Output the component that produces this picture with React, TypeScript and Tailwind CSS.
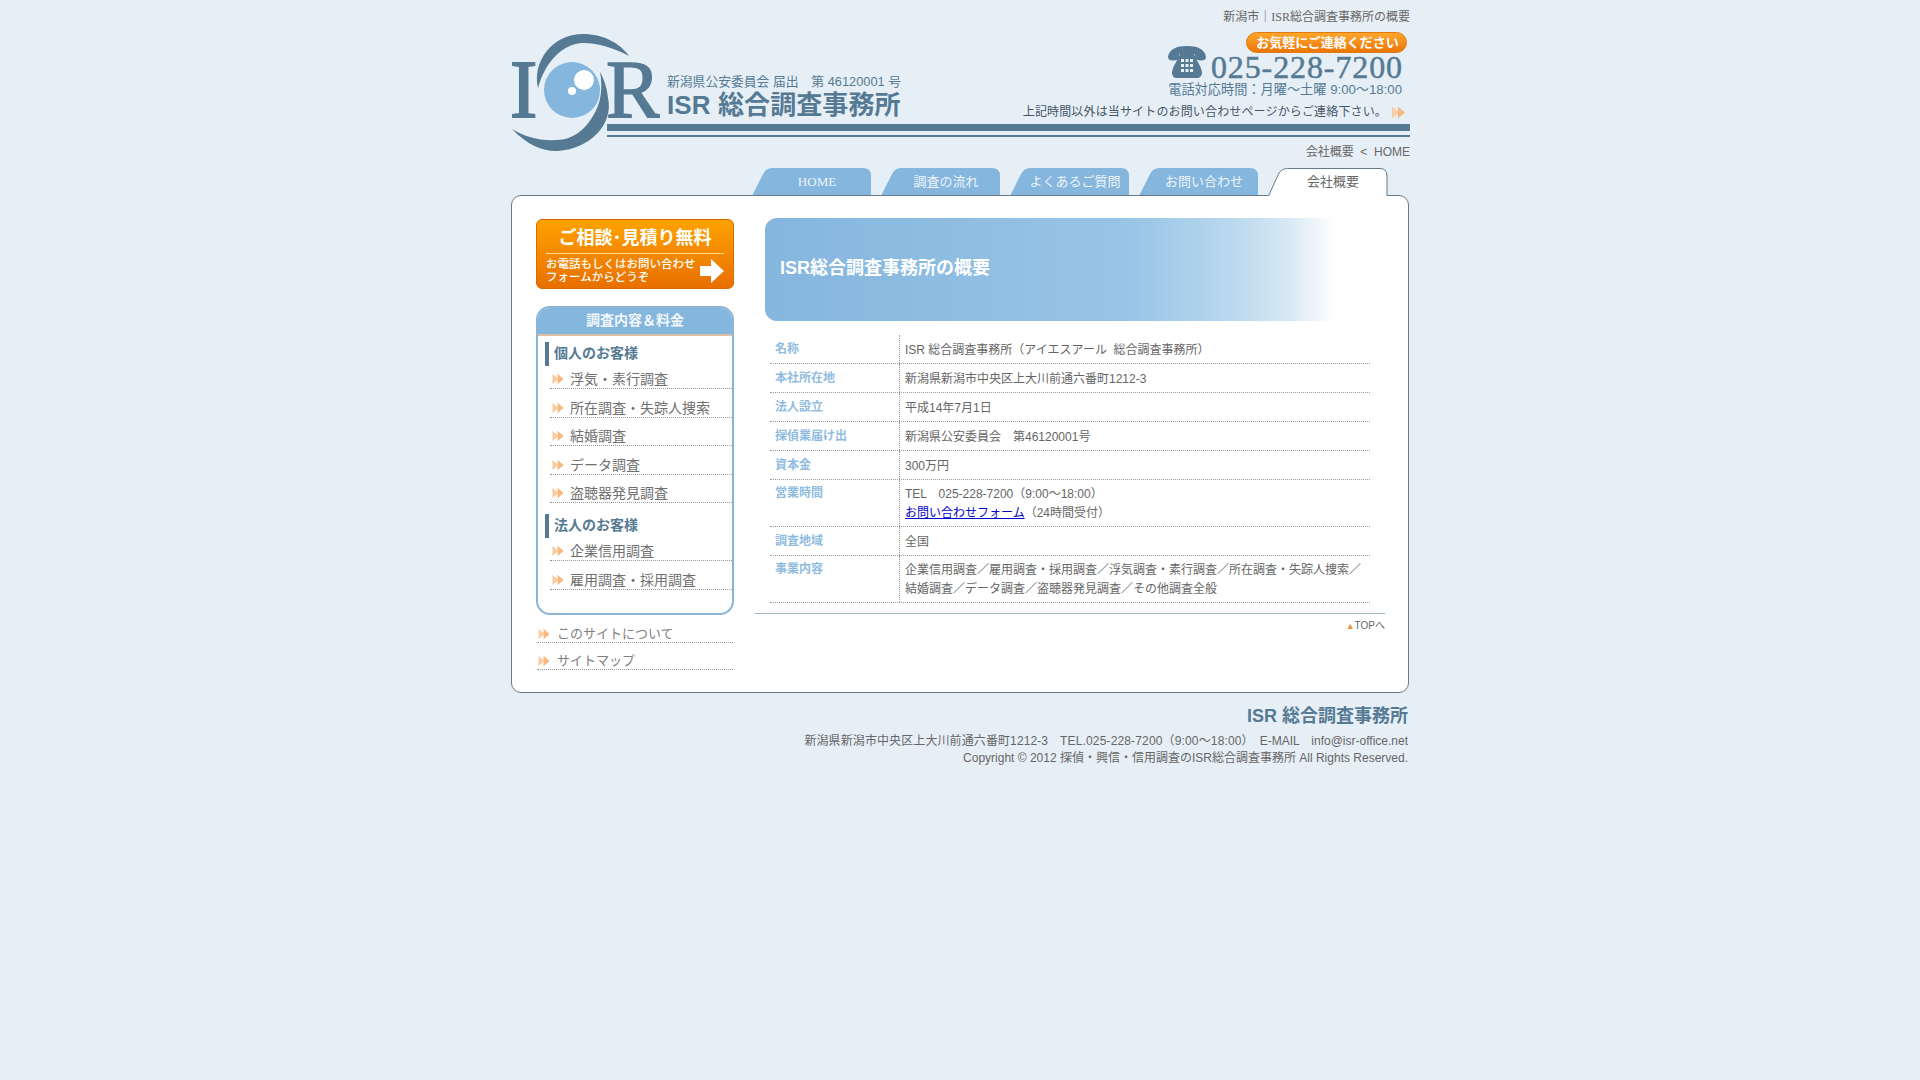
import React from "react";

const SANS = "font-['Liberation_Sans','Noto_Sans_CJK_JP',sans-serif]";

function Arrow({ className = "" }: { className?: string }) {
  return (
    <svg viewBox="0 0 14 13" className={className} aria-hidden="true">
      <path d="M0.5 0.5 L7.5 6.5 L0.5 12.5 Z" fill="#fbcda3" />
      <path d="M6.5 0.5 L13.5 6.5 L6.5 12.5 Z" fill="#f9b87e" />
    </svg>
  );
}

function Logo() {
  return (
    <svg viewBox="510 30 150 125" className="w-[150px] h-[125px] shrink-0 mt-[30px]" aria-label="ISR logo">
      <circle cx="572" cy="90" r="28" fill="#85b6de" />
      <circle cx="584" cy="80" r="10" fill="#ffffff" />
      <circle cx="572" cy="91" r="4" fill="#ffffff" />
      <path d="M538 88 C532 62 552 34 583 34 C603 34 620 43 629 56 C612 47 597 43 583 43 C563 44 546 60 538 88Z" fill="#567a94" />
      <path d="M512 129 C528 146 545 152 558 151 C590 149 614 124 608 98 C607 88 604 79 600 72 C603 88 601 104 593 116 C585 130 572 140 557 140 C540 141 525 137 512 129Z" fill="#567a94" />
      <text x="510" y="117" fontFamily="'Liberation Serif',serif" fontSize="82" fill="#567a94" stroke="#567a94" strokeWidth="1.8">I</text>
      <text x="606" y="117" fontFamily="'Liberation Serif',serif" fontSize="82" fill="#567a94" stroke="#567a94" strokeWidth="1.5">R</text>
    </svg>
  );
}

function PhoneIcon() {
  return (
    <svg viewBox="0 0 38 32" className="w-[38px] h-[32px] mb-[2px] mr-[5px] shrink-0" aria-hidden="true">
      <path d="M0 11 C1 3 9 0 19 0 C29 0 37 3 38 11 C38 13.500 36 14.500 33 14.500 C30 14.500 27 13.500 27 11 L27 8 C24 6.500 14 6.500 11 8 L11 11 C11 13.500 8 14.500 5 14.500 C2 14.500 0 13.500 0 11Z" fill="#567a94" />
      <path d="M12 7 L26 7 C27 13 33 19 34 26 C34 30 32 32 29 32 L9 32 C6 32 4 30 4 26 C5 19 11 13 12 7Z" fill="#567a94" />
      <g fill="#e6eff6">
        {[13, 18, 23].map((y) =>
          [13, 17.500, 22].map((x) => <rect key={`${x}-${y}`} x={x} y={y} width="3" height="3" />)
        )}
      </g>
    </svg>
  );
}

function Tab({ label, active }: { label: string; active?: boolean }) {
  return (
    <div className={`relative w-[120px] flex items-center justify-center pl-[10px] ${active ? "h-[28px] -mb-px z-10 text-[#666666]" : "h-[27px] text-[#eef4f9]"} text-[13px] font-['Liberation_Serif','Noto_Sans_CJK_JP',serif]`}>
      <svg viewBox="0 0 120 28" className="absolute inset-0 w-[120px] h-[28px]" aria-hidden="true">
        {active ? (
          <path d="M0.500 28 L10.500 6 Q13.500 0.500 19.500 0.500 L112 0.500 Q119 0.500 119 8 L119 28" fill="#ffffff" stroke="#667a8a" />
        ) : (
          <path d="M0.500 27 L11 6 Q14 0 20 0 L111 0 Q119 0 119 8 L119 27Z" fill="#85b6de" />
        )}
      </svg>
      <span className="relative">{label}</span>
    </div>
  );
}

function MenuItem({ label }: { label: string }) {
  return (
    <li className="ml-[12px] h-[28.500px] first:h-[23px] border-b border-dotted border-[#999999] flex items-end pl-[2px] text-[14px] leading-[18px] text-[#707070]">
      <Arrow className="w-[12px] h-[12px] mr-[6px] mb-[3px] shrink-0" />
      {label}
    </li>
  );
}

function SectionHead({ label }: { label: string }) {
  return (
    <div className="ml-[7px] h-[24px] border-l-[4px] border-[#567a94] pl-[5px] pb-[2px] flex items-center text-[14px] font-bold text-[#567a94]">
      {label}
    </div>
  );
}

function SubLink({ label }: { label: string }) {
  return (
    <div className="mx-px h-[27px] border-b border-dotted border-[#999999] flex items-end text-[13px] leading-[16px] text-[#808080]">
      <Arrow className="w-[12px] h-[12px] ml-px mr-[7px] mb-[2px] shrink-0" />
      {label}
    </div>
  );
}

const rows: { label: string; two?: boolean; value: React.ReactNode }[] = [
  { label: "名称", value: "ISR 総合調査事務所（アイエスアール  総合調査事務所）" },
  { label: "本社所在地", value: "新潟県新潟市中央区上大川前通六番町1212-3" },
  { label: "法人設立", value: "平成14年7月1日" },
  { label: "探偵業届け出", value: "新潟県公安委員会　第46120001号" },
  { label: "資本金", value: "300万円" },
  {
    label: "営業時間",
    two: true,
    value: (
      <>
        TEL　025-228-7200（9:00〜18:00）
        <br />
        <a href="#" className="text-[#0000cc] underline">お問い合わせフォーム</a>（24時間受付）
      </>
    ),
  },
  { label: "調査地域", value: "全国" },
  {
    label: "事業内容",
    two: true,
    value: (
      <>
        企業信用調査／雇用調査・採用調査／浮気調査・素行調査／所在調査・失踪人捜索／
        <br />
        結婚調査／データ調査／盗聴器発見調査／その他調査全般
      </>
    ),
  },
];

export default function App() {
  return (
    <div className={`min-h-screen bg-[#e6eff6] ${SANS}`}>
      <div className="w-[900px] mx-auto">
        <header className="h-[168px] flex">
          <Logo />
          <div className="flex-1 min-w-0">
            <p className="h-[25px] pt-[9px] text-right text-[12px] leading-[16px] text-[#666666] font-['Liberation_Serif','Noto_Sans_CJK_JP',serif]">
              新潟市｜ISR総合調査事務所の概要
            </p>
            <div className="h-[99px] flex justify-between">
              <div className="pl-[7px] pt-[49px] w-[240px] text-[#567a94]">
                <p className="text-[12.800px] leading-[16px] whitespace-nowrap">新潟県公安委員会 届出　第 46120001 号</p>
                <p className="text-[26px] leading-[30px] tracking-[0.1px] font-bold whitespace-nowrap">ISR 総合調査事務所</p>
              </div>
              <div className="flex flex-col items-end pt-[7px]">
                <div className="h-[21px] w-[161px] mr-[3px] pl-[2px] rounded-full border border-[#e07a10] bg-gradient-to-b from-[#ffa62b] to-[#ec7500] flex items-center justify-center text-[13px] font-bold text-white whitespace-nowrap">
                  お気軽にご連絡ください
                </div>
                <div className="mt-[2px] h-[25px] mr-[7px] flex items-end text-[#567a94]">
                  <PhoneIcon />
                  <span className="text-[32px] leading-[25px] tracking-[0.9px] font-['Liberation_Serif',serif] [-webkit-text-stroke:0.5px_#567a94]">025-228-7200</span>
                </div>
                <p className="mt-[2px] mr-[8px] text-[13.200px] leading-[16px] text-[#567a94] whitespace-nowrap">電話対応時間：月曜～土曜 9:00～18:00</p>
                <p className="mt-[6px] mr-[4px] flex items-center text-[12px] tracking-[0.15px] leading-[16px] text-[#445566] whitespace-nowrap">
                  上記時間以外は当サイトのお問い合わせページからご連絡下さい。
                  <Arrow className="w-[15px] h-[13px] ml-[4px]" />
                </p>
              </div>
            </div>
            <div className="h-[7px] -ml-[53px] bg-[#567a94]" />
            <div className="h-[2px] mt-[4px] -ml-[53px] bg-[#567a94]" />
            <p className="mt-[7px] text-right text-[12px] leading-[16px] text-[#666666]">会社概要{"\u00a0\u00a0"}&lt;{"\u00a0\u00a0"}HOME</p>
          </div>
        </header>

        <nav className="h-[27px] pl-[242px] flex gap-[9px] items-start">
          <Tab label="HOME" />
          <Tab label="調査の流れ" />
          <Tab label="よくあるご質問" />
          <Tab label="お問い合わせ" />
          <Tab label="会社概要" active />
        </nav>

        <main className="mx-px h-[498px] rounded-[10px] border border-[#667a8a] bg-white pl-[24px] pt-[23px] flex">
          <aside className="w-[198px] shrink-0">
            <div className="h-[70px] rounded-[6px] border border-[#d96c00] bg-gradient-to-b from-[#ffa200] to-[#e86f00] px-[9px] text-white">
              <p className="h-[33px] pt-[4px] text-center text-[18px] leading-[28px] font-bold font-['Liberation_Serif','Noto_Sans_CJK_JP',serif] whitespace-nowrap">ご相談･見積り無料</p>
              <div className="border-t border-[#ffd98a] flex items-center justify-between pt-[4px]">
                <p className="text-[11.500px] leading-[13px] font-medium whitespace-nowrap">お電話もしくはお問い合わせ<br />フォームからどうぞ</p>
                <svg viewBox="0 0 24 24" className="w-[24px] h-[24px] shrink-0" aria-hidden="true">
                  <path d="M0 7 H11 V0 L24 12 L11 24 V17 H0Z" fill="#ffffff" />
                </svg>
              </div>
            </div>

            <div className="mt-[17px] h-[309px] rounded-[14px] border-[2px] border-[#8ab5d5] overflow-hidden bg-white">
              <h2 className="h-[27px] -mt-px bg-[#85b6de] border-b-[2px] border-[#dcc0a4] box-content flex items-center justify-center text-[14px] font-bold text-[#f2f7fb]">調査内容＆料金</h2>
              <div className="pt-[6px]">
                <SectionHead label="個人のお客様" />
                <ul>
                  <MenuItem label="浮気・素行調査" />
                  <MenuItem label="所在調査・失踪人捜索" />
                  <MenuItem label="結婚調査" />
                  <MenuItem label="データ調査" />
                  <MenuItem label="盗聴器発見調査" />
                </ul>
                <div className="mt-[11px]"><SectionHead label="法人のお客様" /></div>
                <ul>
                  <MenuItem label="企業信用調査" />
                  <MenuItem label="雇用調査・採用調査" />
                </ul>
              </div>
            </div>

            <div className="pt-px">
              <SubLink label="このサイトについて" />
              <SubLink label="サイトマップ" />
            </div>
          </aside>

          <section className="w-[630px] ml-[21px]">
            <div className="-mt-px ml-[10px] w-[570px] h-[103px] pb-[2px] rounded-l-[12px] bg-[linear-gradient(to_right,#85b6de_0%,#98c4e6_64%,#b8d8ee_81.5%,#d8e8f3_92%,#ffffff_100%)] flex items-center pl-[15px]">
              <h1 className="text-[18px] font-bold text-white">ISR総合調査事務所の概要</h1>
            </div>
            <div className="mt-[14px] ml-[15px] w-[600px]">
              {rows.map((r) => (
                <div key={r.label} className={`flex ${r.two ? "h-[47px]" : "h-[29px]"} border-b border-dotted border-[#999999]`}>
                  <div className={`w-[129px] shrink-0 pl-[5px] ${r.two ? "pt-[4px]" : "pt-[4.500px]"} text-[12px] leading-[19px] font-bold text-[#8fbce0]`}>{r.label}</div>
                  <div className={`flex-1 border-l border-dotted border-[#999999] pl-[5px] ${r.two ? "pt-[5px]" : "pt-[5.500px]"} text-[12px] leading-[18.500px] text-[#666666] whitespace-pre`}>{r.value}</div>
                </div>
              ))}
            </div>
            <div className="mt-[10px] border-t border-[#9ab8c8] text-right pt-[5px] text-[10px] leading-[14px] text-[#666666]">
              <span className="text-[#e8963c] text-[9px]">▲</span>TOPへ
            </div>
          </section>
        </main>

        <footer className="pr-[2px] text-right">
          <p className="mt-[12px] text-[18px] leading-[22px] font-bold text-[#567a94]">ISR 総合調査事務所</p>
          <p className="mt-[6px] text-[12px] leading-[17px] text-[#666666]"><span className="tracking-[0.1px]">新潟県新潟市中央区上大川前通六番町1212-3</span>　<span className="tracking-[0.15px]">TEL.025-228-7200（9:00〜18:00）</span>　E-MAIL　info@isr-office.net</p>
          <p className="text-[12px] leading-[17px] text-[#666666]">Copyright © 2012 探偵・興信・信用調査のISR総合調査事務所 All Rights Reserved.</p>
        </footer>
      </div>
    </div>
  );
}
